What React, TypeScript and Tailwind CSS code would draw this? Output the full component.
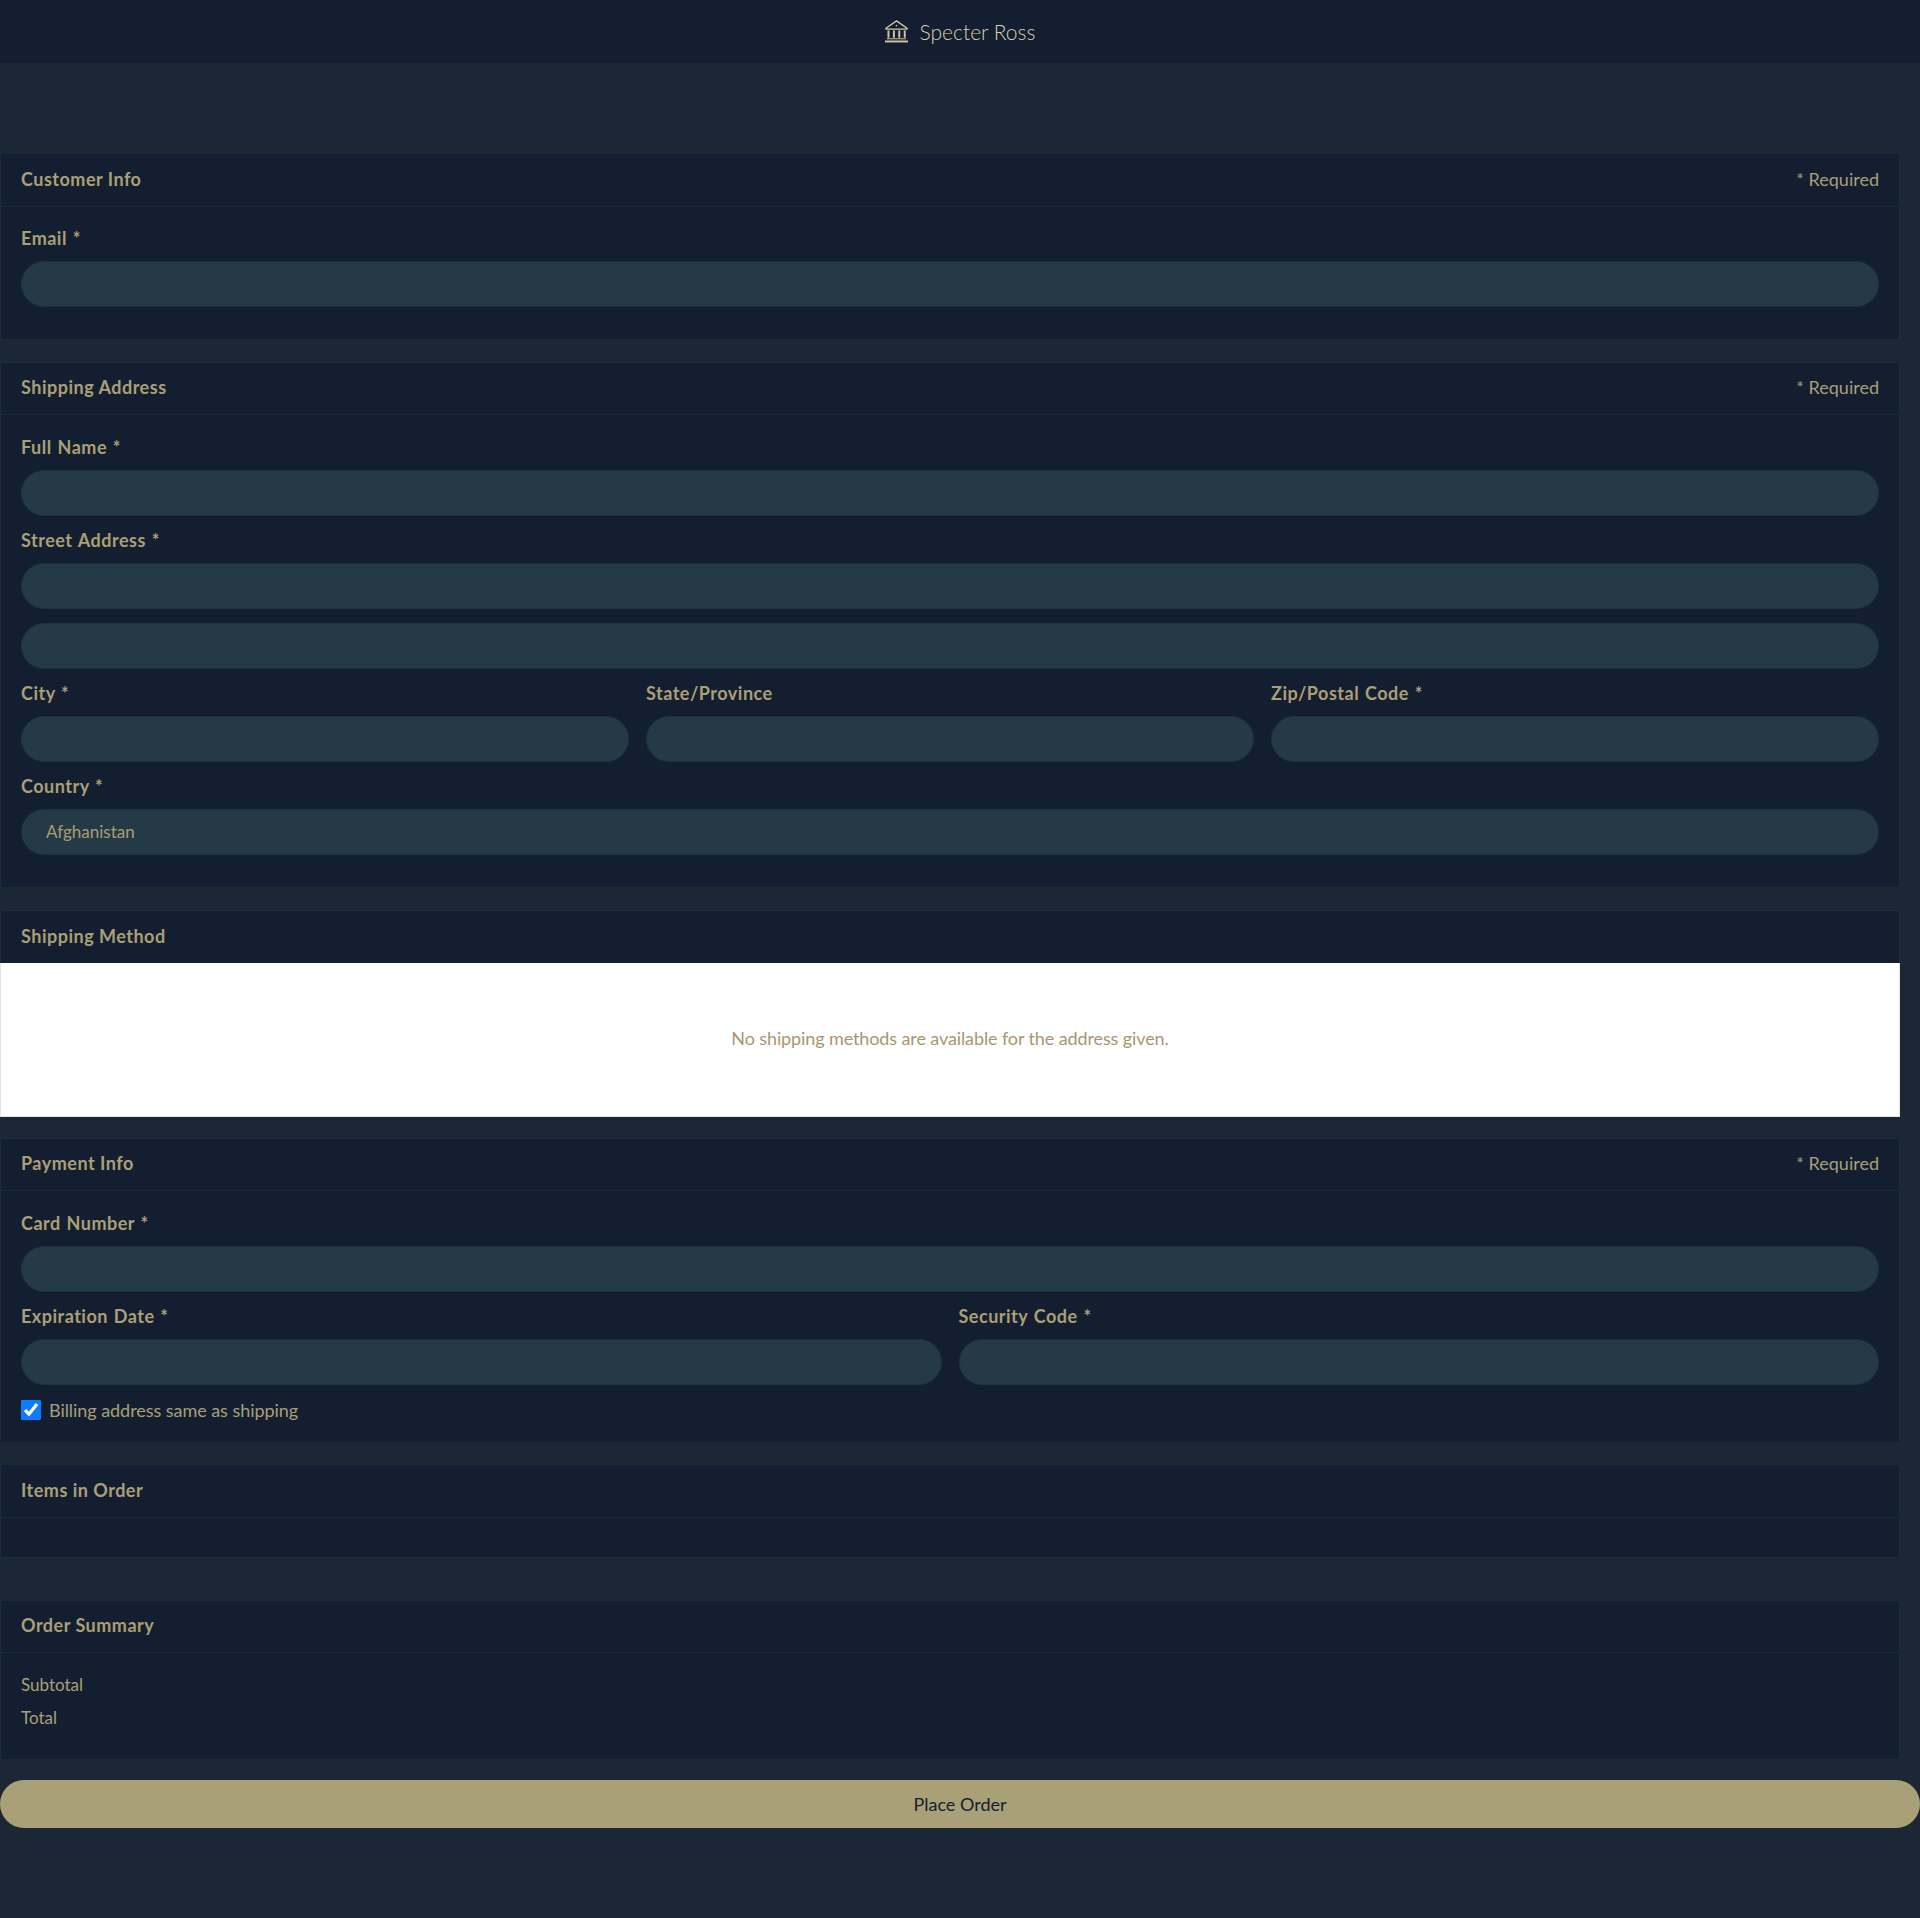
import type { ReactNode } from 'react';

const inputCls =
  'block w-full h-[46px] rounded-[23px] border border-[#1d3340] bg-[#243a46] px-[24px] text-[17px] text-[#a99f75] outline-none';

function BankIcon() {
  return (
    <svg viewBox="0 0 24 24" className="w-[23px] h-[23px]" fill="none" stroke="#d3c8a2" strokeWidth="1.5">
      <path d="M1 8.6 12 1l11 7.6v.9H1z" strokeLinejoin="round" />
      <circle cx="12" cy="5.8" r="0.9" fill="#d3c8a2" stroke="none" />
      <path d="M3.6 11v7.6M9.3 11v7.6M14.9 11v7.6M20.6 11v7.6" strokeWidth="2" />
      <path d="M2 19.6h20" strokeWidth="1" />
      <path d="M0 22.4h24" strokeWidth="2" />
    </svg>
  );
}

function Field({ label, children }: { label: string; children: ReactNode }) {
  return (
    <div>
      <label className="block h-[47px] pt-[12px] text-[18px] leading-[24px] font-bold tracking-[0.5px] [word-spacing:1px] text-[#ab9f75]">
        {label}
      </label>
      {children}
    </div>
  );
}

function Section({
  title,
  required,
  compact,
  children,
  className,
}: {
  title: string;
  required?: boolean;
  compact?: boolean;
  children?: ReactNode;
  className?: string;
}) {
  return (
    <section className={`border border-[#172b3a] bg-[#131f31] ${className ?? ''}`}>
      <header
        className={`flex items-center justify-between border-b border-[#172b3a] px-[20px] pb-[2px] box-border ${
          compact ? 'h-[52px]' : 'h-[53px]'
        }`}
      >
        <h2 className="text-[18px] font-bold tracking-[0.5px] text-[#ab9f75]">{title}</h2>
        {required && <span className="text-[18px] text-[#a99f75]">* Required</span>}
      </header>
      {children}
    </section>
  );
}

export default function App() {
  return (
    <div className="min-h-[1918px] bg-[#1b2735] font-['Lato','Liberation_Sans',sans-serif]">
      <div className="flex h-[63px] items-center justify-center gap-[12px] bg-[#131f31]">
        <BankIcon />
        <span className="text-[21px] font-light text-[#d8cea8]">Specter Ross</span>
      </div>

      <div className="pt-[90px] pr-[20px]">
        <Section title="Customer Info" required className="mb-[22px]">
          <div className="px-[20px] pt-[7px] pb-[32px]">
            <Field label="Email *">
              <input className={inputCls} readOnly />
            </Field>
          </div>
        </Section>

        <Section title="Shipping Address" required compact className="mb-[22px]">
          <div className="px-[20px] pt-[8px] pb-[32px]">
            <Field label="Full Name *">
              <input className={inputCls} readOnly />
            </Field>
            <Field label="Street Address *">
              <input className={`${inputCls} mb-[14px]`} readOnly />
              <input className={inputCls} readOnly />
            </Field>
            <div className="grid grid-cols-3 gap-x-[17px]">
              <Field label="City *">
                <input className={inputCls} readOnly />
              </Field>
              <Field label="State/Province">
                <input className={inputCls} readOnly />
              </Field>
              <Field label="Zip/Postal Code *">
                <input className={inputCls} readOnly />
              </Field>
            </div>
            <Field label="Country *">
              <select className={`${inputCls} appearance-none`} defaultValue="Afghanistan">
                <option>Afghanistan</option>
              </select>
            </Field>
          </div>
        </Section>

        <Section title="Shipping Method" className="mb-[21px]">
          <div className="-mx-px -mb-px -mt-px flex h-[154px] items-center justify-center border border-t-0 border-[#e5e5e5] bg-white pb-[2px] text-[18px] tracking-[-0.11px] text-[#a9966e]">
            No shipping methods are available for the address given.
          </div>
        </Section>

        <Section title="Payment Info" required compact className="mb-[21px]">
          <div className="px-[20px] pt-[8px] pb-[22px]">
            <Field label="Card Number *">
              <input className={inputCls} readOnly />
            </Field>
            <div className="grid grid-cols-2 gap-x-[17px]">
              <Field label="Expiration Date *">
                <input className={inputCls} readOnly />
              </Field>
              <Field label="Security Code *">
                <input className={inputCls} readOnly />
              </Field>
            </div>
            <label className="mt-[15px] flex h-[20px] items-center gap-[8px] text-[18px] tracking-[-0.05px] text-[#a99f75]">
              <input type="checkbox" defaultChecked className="h-[20px] w-[20px] accent-[#0a7cff]" />
              Billing address same as shipping
            </label>
          </div>
        </Section>

        <Section title="Items in Order" className="mb-[42px]">
          <div className="h-[39px]" />
        </Section>

        <Section title="Order Summary" compact className="mb-[20px]">
          <div className="px-[20px] pt-[15px] pb-[25px] text-[17px] leading-[33px] text-[#a99f75]">
            <div>Subtotal</div>
            <div>Total</div>
          </div>
        </Section>
      </div>

      <button className="block h-[48px] w-full rounded-[24px] bg-[#a9a077] text-[18px] text-[#131f31]">Place Order</button>
    </div>
  );
}
